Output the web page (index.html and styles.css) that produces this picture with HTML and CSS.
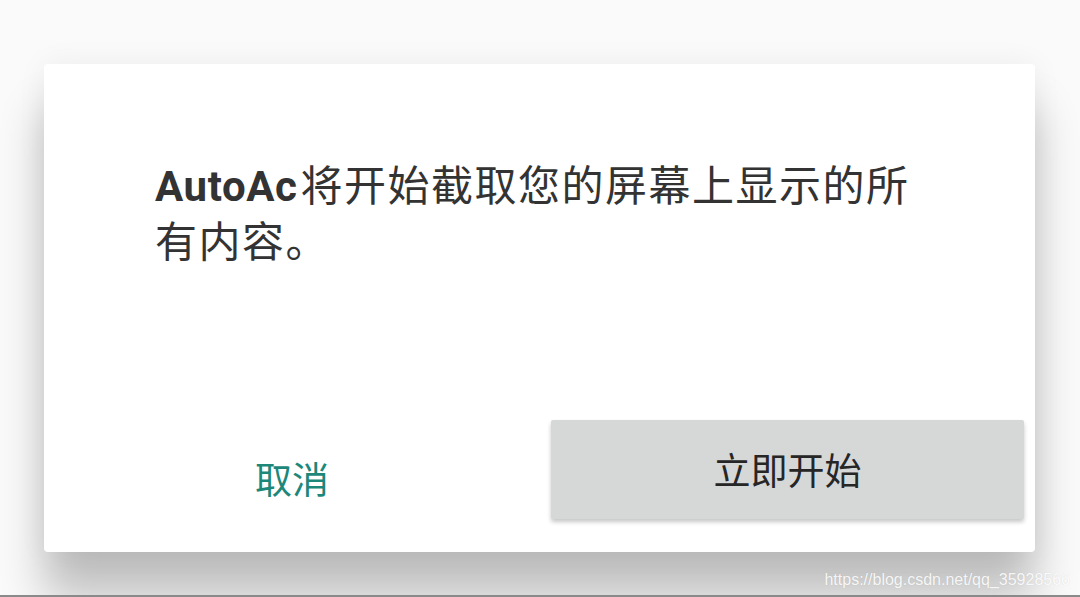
FILE: index.html
```html
<!DOCTYPE html>
<html lang="zh">
<head>
<meta charset="utf-8">
<title>AutoAc</title>
<link rel="stylesheet" href="styles.css">
</head>
<body>
<div class="screen">
  <div class="dialog">
    <p class="message"><b>AutoAc</b>将开始截取您的屏幕上显示的所有内容。</p>
    <div class="actions">
      <div class="cancel">取消</div>
      <div class="start">立即开始</div>
    </div>
  </div>
  <div class="watermark">https://blog.csdn.net/qq_35928566</div>
</div>
<div class="edge"></div>
</body>
</html>
```
FILE: styles.css
```css
html, body {
  margin: 0;
  padding: 0;
}
body {
  width: 1080px;
  height: 597px;
  overflow: hidden;
  background: #fafafa;
  font-family: Roboto, "Noto Sans CJK SC", sans-serif;
}
.screen {
  position: relative;
  height: 595px;
  padding-top: 64px;
  box-sizing: border-box;
  overflow: hidden;
}
.dialog {
  margin-left: 44px;
  width: 991px;
  height: 488px;
  box-sizing: border-box;
  background: #fff;
  border-radius: 4px;
  padding-top: 95px;
  display: flex;
  flex-direction: column;
  box-shadow: 0 45px 45px rgba(0, 0, 0, 0.24), 0 0 30px rgba(0, 0, 0, 0.06);
}
.message {
  margin: 0;
  padding-left: 111px;
  padding-right: 110px;
  font-size: 42px;
  line-height: 56px;
  color: #333;
  letter-spacing: 1.5px;
}
.message b {
  font-weight: 700;
  letter-spacing: 0.6px;
  margin-right: 3px;
}
.actions {
  margin-top: auto;
  margin-bottom: 33px;
  display: flex;
  gap: 11px;
  padding-right: 11px;
  height: 99px;
}
.cancel {
  width: 496px;
  display: flex;
  align-items: center;
  justify-content: center;
  padding-top: 16px;
  box-sizing: border-box;
  font-size: 37px;
  color: #1d877a;
}
.start {
  flex: 1;
  display: flex;
  align-items: center;
  justify-content: center;
  padding-bottom: 2px;
  box-sizing: border-box;
  background: #d6d7d7;
  border-radius: 2px;
  box-shadow: 0 3px 4px rgba(0, 0, 0, 0.22);
  font-size: 37px;
  color: #262626;
}
.watermark {
  position: absolute;
  right: 10px;
  bottom: 6px;
  font-family: "Liberation Sans", Arial, sans-serif;
  font-size: 16px;
  color: rgba(255, 255, 255, 0.9);
  text-shadow: 0 0 1px rgba(0, 0, 0, 0.12);
}
.edge {
  height: 2px;
  background: #8a8a8a;
}
```
